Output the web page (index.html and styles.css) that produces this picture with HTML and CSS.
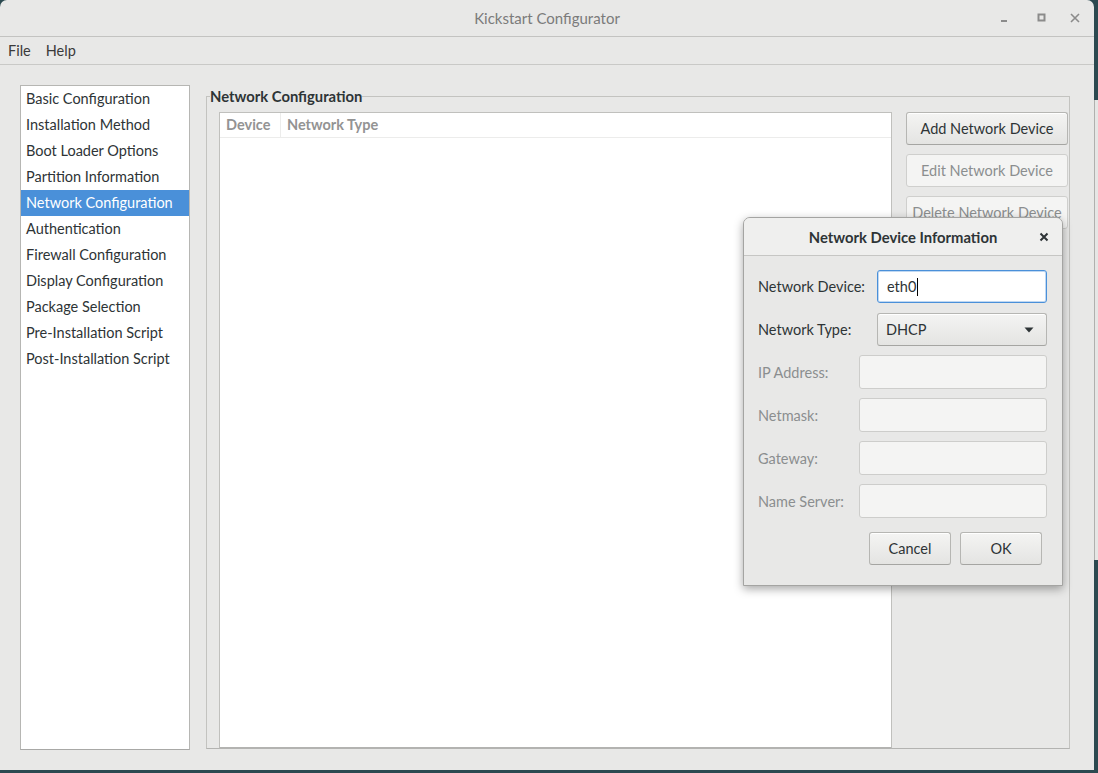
FILE: index.html
```html
<!DOCTYPE html>
<html>
<head>
<meta charset="utf-8">
<title>Kickstart Configurator</title>
<link rel="stylesheet" href="styles.css">
</head>
<body>
<div class="desktop">
  <div class="window">
    <header class="titlebar">
      <span class="title">Kickstart Configurator</span>
      <div class="wm-buttons">
        <svg class="wm-icon wm-min" width="10" height="10" viewBox="0 0 10 10"><rect x="2" y="7" width="6" height="2" fill="#8b8b8b"/></svg>
        <svg class="wm-icon wm-max" width="10" height="10" viewBox="0 0 10 10"><rect x="1.5" y="1.5" width="6" height="6" fill="none" stroke="#8b8b8b" stroke-width="2"/></svg>
        <svg class="wm-icon wm-close" width="10" height="10" viewBox="0 0 10 10"><path d="M1 1 L9 9 M9 1 L1 9" stroke="#8b8b8b" stroke-width="1.6"/></svg>
      </div>
    </header>
    <nav class="menubar">
      <span class="menu-item">File</span>
      <span class="menu-item">Help</span>
    </nav>
    <main class="content">
      <ul class="sidebar">
        <li class="side-item">Basic Configuration</li>
        <li class="side-item">Installation Method</li>
        <li class="side-item">Boot Loader Options</li>
        <li class="side-item">Partition Information</li>
        <li class="side-item selected">Network Configuration</li>
        <li class="side-item">Authentication</li>
        <li class="side-item">Firewall Configuration</li>
        <li class="side-item">Display Configuration</li>
        <li class="side-item">Package Selection</li>
        <li class="side-item">Pre-Installation Script</li>
        <li class="side-item">Post-Installation Script</li>
      </ul>
      <fieldset class="frame">
        <legend class="frame-label">Network Configuration</legend>
        <div class="frame-body">
          <div class="table">
            <div class="table-head">
              <span class="th th-device">Device</span>
              <span class="th th-type">Network Type</span>
            </div>
          </div>
          <div class="actions">
            <button class="btn">Add Network Device</button>
            <button class="btn disabled">Edit Network Device</button>
            <button class="btn disabled">Delete Network Device</button>
          </div>
        </div>
      </fieldset>
    </main>
  </div>
  <div class="side-strip"></div>

  <div class="dialog">
    <div class="dialog-title">
      <span class="dialog-title-text">Network Device Information</span>
      <svg class="dialog-close" width="10" height="10" viewBox="0 0 10 10"><path d="M1.5 1.5 L8.5 8.5 M8.5 1.5 L1.5 8.5" stroke="#2e3436" stroke-width="2"/></svg>
    </div>
    <div class="dialog-body">
      <div class="form-row wide first">
        <span class="label">Network Device:</span>
        <div class="entry focused"><span class="entry-text">eth0</span><span class="caret"></span></div>
      </div>
      <div class="form-row wide">
        <span class="label">Network Type:</span>
        <div class="combo"><span class="combo-text">DHCP</span>
          <svg class="combo-arrow" width="10" height="6" viewBox="0 0 10 6"><path d="M0.5 0.5 L9.5 0.5 L5 5.5 Z" fill="#2e3436"/></svg>
        </div>
      </div>
      <div class="form-row">
        <span class="label disabled">IP Address:</span>
        <div class="entry off"></div>
      </div>
      <div class="form-row">
        <span class="label disabled">Netmask:</span>
        <div class="entry off"></div>
      </div>
      <div class="form-row">
        <span class="label disabled">Gateway:</span>
        <div class="entry off"></div>
      </div>
      <div class="form-row">
        <span class="label disabled">Name Server:</span>
        <div class="entry off"></div>
      </div>
      <div class="dialog-buttons">
        <button class="btn dlg-btn">Cancel</button>
        <button class="btn dlg-btn">OK</button>
      </div>
    </div>
  </div>
</div>
</body>
</html>
```

FILE: styles.css
```css
* { box-sizing: border-box; }

html, body {
  margin: 0;
  padding: 0;
}

body {
  width: 1098px;
  height: 773px;
  overflow: hidden;
  background: #2b4950;
  font-family: "Lato", "Noto Sans", sans-serif;
  font-size: 14.5px;
  color: #2e3436;
}

.desktop {
  position: relative;
  width: 1098px;
  height: 773px;
  display: flex;
  align-items: flex-start;
}

.window {
  width: 1094px;
  height: 770px;
  background: #e8e8e7;
  border-radius: 7px 7px 0 0;
  display: flex;
  flex-direction: column;
  flex-shrink: 0;
}

.side-strip {
  width: 4px;
  height: 460px;
  margin-top: 100px;
  background: #e6e6e5;
  border-left: 1px solid #b0b0ae;
}

/* title bar */
.titlebar {
  height: 37px;
  border-bottom: 1px solid #c3c3c1;
  display: flex;
  align-items: center;
  justify-content: center;
  position: relative;
}

.title {
  font-size: 15px;
  color: #7b7b7b;
}

.wm-buttons {
  position: absolute;
  right: 14px;
  top: 13px;
  display: flex;
}

.wm-icon { display: block; }
.wm-max { margin-left: 28px; }
.wm-close { margin-left: 23px; }

/* menu */
.menubar {
  height: 28px;
  border-bottom: 1px solid #c9c9c7;
  display: flex;
  align-items: center;
  padding-left: 8px;
  gap: 15px;
}

.menu-item {
  color: #3a3a3a;
  font-size: 14.5px;
}

/* content */
.content {
  flex: 1;
  display: flex;
  padding: 20px 24px 20px 20px;
  gap: 16px;
}

.sidebar {
  list-style: none;
  margin: 0;
  padding: 0;
  width: 170px;
  height: 665px;
  background: #fff;
  border: 1px solid #b6b6b3;
  border-bottom-color: #a8a8a6;
}

.side-item {
  height: 26px;
  line-height: 26px;
  padding-left: 5px;
  white-space: nowrap;
}

.side-item.selected {
  background: #4a90d9;
  color: #fff;
}

.frame {
  margin: 0;
  margin-top: 3px;
  padding: 0 1px 0 12px;
  width: 864px;
  height: 661px;
  border: 1px solid #c3c3c0;
  border-bottom-color: #b3b3b1;
  min-width: 0;
}

.frame-label {
  padding: 0;
  margin-left: -9px;
  font-weight: 700;
  font-size: 14.8px;
  color: #2e3436;
  line-height: 16px;
}

.frame-body {
  display: flex;
  gap: 14px;
  height: 100%;
  padding-top: 8px;
}

.table {
  width: 673px;
  height: 637px;
  background: #fff;
  border: 1px solid #c0c0bd;
  border-bottom: 2px solid #b3b3b1;
}

.table-head {
  display: flex;
  height: 25px;
  border-bottom: 1px solid #ececeb;
}

.th {
  color: #939393;
  font-weight: 700;
  line-height: 24px;
  padding-left: 6px;
}

.th-device {
  width: 61px;
  border-right: 1px solid #ececeb;
}

.actions {
  width: 162px;
  display: flex;
  flex-direction: column;
  gap: 9px;
}

.btn {
  height: 33px;
  font-family: inherit;
  font-size: 14.5px;
  color: #2e3436;
  background: linear-gradient(#f4f4f3, #e4e4e2);
  border: 1px solid #b6b6b3;
  border-bottom-color: #a5a5a2;
  border-radius: 3px;
  box-shadow: inset 0 1px #fff;
  padding: 0;
}

.btn.disabled {
  background: #f4f4f3;
  border-color: #cfcfcd;
  color: #8b8e8f;
  box-shadow: none;
}

/* dialog */
.dialog {
  position: absolute;
  left: 743px;
  top: 217px;
  width: 320px;
  height: 369px;
  background: #e8e8e7;
  border: 1px solid #a4a4a2;
  border-radius: 7px 7px 0 0;
  box-shadow: 0 3px 10px rgba(0, 0, 0, 0.35);
  display: flex;
  flex-direction: column;
}

.dialog-title {
  height: 38px;
  border-bottom: 1px solid #c6c6c4;
  background: #efefee;
  border-radius: 6px 6px 0 0;
  display: flex;
  align-items: center;
  justify-content: center;
  position: relative;
}

.dialog-title-text {
  font-weight: 700;
  font-size: 14.8px;
  color: #2e3436;
}

.dialog-close {
  position: absolute;
  right: 13px;
  top: 14px;
}

.dialog-body {
  padding: 14px 15px 0 14px;
  display: flex;
  flex-direction: column;
  gap: 9px;
}

.form-row {
  display: flex;
  align-items: center;
  height: 34px;
}

.form-row.wide { height: 33px; }
.form-row.first { margin-bottom: 1px; }

.label {
  width: 101px;
  flex-shrink: 0;
  white-space: nowrap;
}

.form-row.wide .label { width: 119px; }

.label.disabled { color: #8b8e8f; }

.entry {
  flex: 1;
  height: 100%;
  border: 1px solid #b6b6b3;
  border-radius: 3px;
  background: #fff;
  display: flex;
  align-items: center;
  padding-left: 9px;
}

.entry.focused {
  border-color: #4a90d9;
  box-shadow: inset 0 0 0 1px rgba(74, 144, 217, 0.35);
}

.entry.off {
  background: #f4f4f3;
  border-color: #cdcdcb;
}

.caret {
  width: 1px;
  height: 18px;
  background: #000;
  margin-left: 1px;
}

.combo {
  flex: 1;
  height: 100%;
  border: 1px solid #b6b6b3;
  border-bottom-color: #a5a5a2;
  border-radius: 3px;
  background: linear-gradient(#f4f4f3, #e4e4e2);
  box-shadow: inset 0 1px #fff;
  display: flex;
  align-items: center;
  justify-content: space-between;
  padding: 0 12px 0 8px;
}

.combo-arrow { display: block; }

.dialog-buttons {
  display: flex;
  justify-content: flex-end;
  gap: 9px;
  padding-right: 5px;
  margin-top: 5px;
}

.dlg-btn {
  width: 82px;
}
```
